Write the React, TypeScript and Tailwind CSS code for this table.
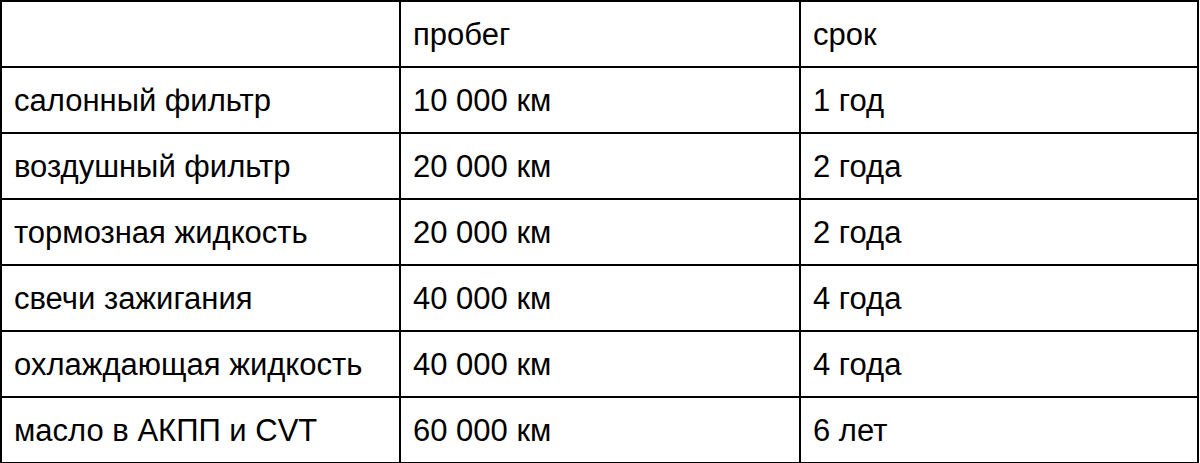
const rows = [
  ["салонный фильтр", "10 000 км", "1 год"],
  ["воздушный фильтр", "20 000 км", "2 года"],
  ["тормозная жидкость", "20 000 км", "2 года"],
  ["свечи зажигания", "40 000 км", "4 года"],
  ["охлаждающая жидкость", "40 000 км", "4 года"],
  ["масло в АКПП и CVT", "60 000 км", "6 лет"],
];

export default function App() {
  return (
    <div className="h-[463px] w-[1200px] bg-white" style={{ fontFamily: '"Liberation Sans", Arial, sans-serif' }}>
      <table className="w-[1199px] border-collapse text-[31px] leading-none text-black">
        <tbody>
          <tr className="h-[66px]">
            <td className="w-[399px] border-2 border-black px-[12px]"></td>
            <td className="w-[400px] border-2 border-black px-[12px]">пробег</td>
            <td className="border-2 border-black px-[12px]">срок</td>
          </tr>
          {rows.map((r) => (
            <tr key={r[0]} className="h-[66px]">
              {r.map((c, i) => (
                <td key={i} className="border-2 border-black px-[12px]">
                  {c}
                </td>
              ))}
            </tr>
          ))}
        </tbody>
      </table>
    </div>
  );
}
